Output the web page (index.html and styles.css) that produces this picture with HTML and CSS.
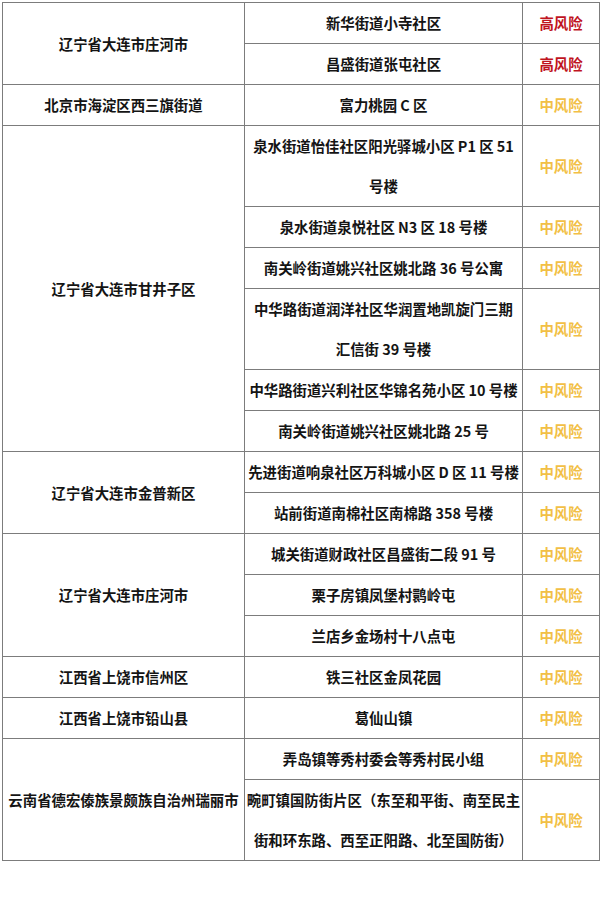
FILE: index.html
```html
<!DOCTYPE html>
<html lang="zh-CN">
<head>
<meta charset="utf-8">
<title>风险地区</title>
<link rel="stylesheet" href="styles.css">
</head>
<body>
<table class="risk">
  <colgroup>
    <col class="c-region">
    <col class="c-place">
    <col class="c-level">
  </colgroup>
  <tbody>
    <tr><td rowspan="2">辽宁省大连市庄河市</td><td>新华街道小寺社区</td><td class="high">高风险</td></tr>
    <tr><td>昌盛街道张屯社区</td><td class="high">高风险</td></tr>
    <tr><td>北京市海淀区西三旗街道</td><td>富力桃园 C 区</td><td class="mid">中风险</td></tr>
    <tr><td rowspan="6">辽宁省大连市甘井子区</td><td>泉水街道怡佳社区阳光驿城小区 P1 区 51<br>号楼</td><td class="mid">中风险</td></tr>
    <tr><td>泉水街道泉悦社区 N3 区 18 号楼</td><td class="mid">中风险</td></tr>
    <tr><td>南关岭街道姚兴社区姚北路 36 号公寓</td><td class="mid">中风险</td></tr>
    <tr><td>中华路街道润洋社区华润置地凯旋门三期<br>汇信街 39 号楼</td><td class="mid">中风险</td></tr>
    <tr><td>中华路街道兴利社区华锦名苑小区 10 号楼</td><td class="mid">中风险</td></tr>
    <tr><td>南关岭街道姚兴社区姚北路 25 号</td><td class="mid">中风险</td></tr>
    <tr><td rowspan="2">辽宁省大连市金普新区</td><td>先进街道响泉社区万科城小区 D 区 11 号楼</td><td class="mid">中风险</td></tr>
    <tr><td>站前街道南棉社区南棉路 358 号楼</td><td class="mid">中风险</td></tr>
    <tr><td rowspan="3">辽宁省大连市庄河市</td><td>城关街道财政社区昌盛街二段 91 号</td><td class="mid">中风险</td></tr>
    <tr><td>栗子房镇凤堡村鹮岭屯</td><td class="mid">中风险</td></tr>
    <tr><td>兰店乡金场村十八点屯</td><td class="mid">中风险</td></tr>
    <tr><td>江西省上饶市信州区</td><td>铁三社区金凤花园</td><td class="mid">中风险</td></tr>
    <tr><td>江西省上饶市铅山县</td><td>葛仙山镇</td><td class="mid">中风险</td></tr>
    <tr><td rowspan="2">云南省德宏傣族景颇族自治州瑞丽市</td><td>弄岛镇等秀村委会等秀村民小组</td><td class="mid">中风险</td></tr>
    <tr><td>畹町镇国防街片区（东至和平街、南至民主<br>街和环东路、西至正阳路、北至国防街）</td><td class="mid">中风险</td></tr>
  </tbody>
</table>
</body>
</html>
```

FILE: styles.css
```css
html, body {
  margin: 0;
  padding: 0;
  background: #ffffff;
}
body {
  padding: 2px 0 0 2px;
  font-family: "Noto Sans CJK SC", "Noto Sans", sans-serif;
  font-weight: 700;
  font-size: 14.4px;
  color: #141414;
}
.risk {
  border-collapse: collapse;
  table-layout: fixed;
  width: 597px;
}
.c-region { width: 242px; }
.c-place { width: 278px; }
.c-level { width: 77px; }
.risk td {
  border: 1px solid #7c7c7c;
  padding: 0;
  line-height: 40px;
  text-align: center;
  vertical-align: middle;
  white-space: nowrap;
  overflow: hidden;
}
.risk td.high { color: #c0141e; }
.risk td.mid { color: #f2bf45; }
```
